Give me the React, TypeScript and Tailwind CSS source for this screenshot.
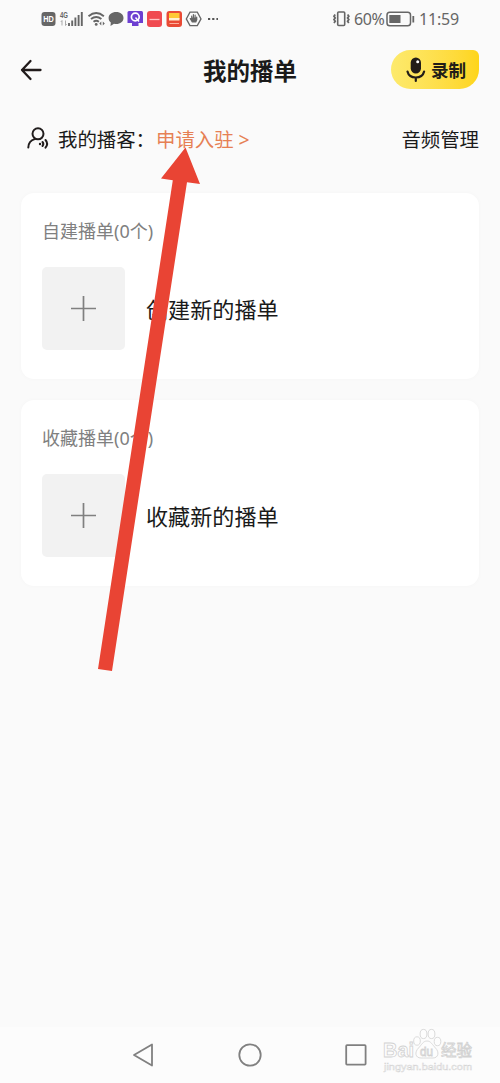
const StatusBar = () => {
  return (
    <div className="flex h-[38px] items-center pl-[41px] pr-[41px] text-[#666]">
      <svg width="180" height="20" viewBox="41 9 180 20" className="font-['Liberation_Sans',sans-serif]">
        <rect x="41.5" y="12" width="14" height="14" rx="3" fill="#666" />
        <text x="43.2" y="22.2" fontSize="8.5" fontWeight="700" fill="#fff" textLength="10.6" lengthAdjust="spacingAndGlyphs">
          HD
        </text>
        <text x="60" y="18" fontSize="8.5" fontWeight="700" fill="#666" textLength="8" lengthAdjust="spacingAndGlyphs">
          4G
        </text>
        <path d="M62 20.5v5M60.8 22l1.2-1.5M65.5 20.5v5M66.7 24l-1.2 1.5" stroke="#aaa" fill="none" />
        <path d="M69 23V26M72.2 20.5v5.5M75.4 17.5V26M78.6 15v11M81.8 12v14" stroke="#666" strokeWidth="1.9" />
        <path
          d="M88.5 16.2q7.7-6.2 15.4 0M91 19q5.2-4.2 10.4 0M93.5 21.8q2.7-2 5.4 0"
          stroke="#666"
          strokeWidth="1.9"
          fill="none"
        />
        <circle cx="96.2" cy="24.4" r="1.4" fill="#666" />
        <path d="M99.3 23.6l2-2v4zM104.8 23.6l-2-2v4z" fill="#666" />
        <path
          d="M116.2 12c4.2 0 7.3 2.5 7.3 6s-3.1 6-7.3 6c-.8 0-1.5 0-2.2-.2L110.5 26l.3-3.5c-1.5-1.2-2.2-2.7-2.2-4.5 0-3.5 3.3-6 7.6-6z"
          fill="#666"
        />
        <rect x="127.5" y="11" width="15.5" height="15" rx="1.5" fill="#6d3fd1" />
        <circle cx="135.3" cy="17" r="3.9" stroke="#fff" strokeWidth="1.7" fill="none" />
        <path d="M135.5 17.5l3.5 4" stroke="#fff" strokeWidth="1.5" />
        <path d="M127 23h5v4h-5zM138.5 23h5v4h-5z" fill="#fafafa" />
        <rect x="147" y="11" width="15" height="16" rx="3" fill="#f04a50" />
        <path d="M149.5 19.5h10" stroke="#ffc3c3" strokeWidth="1.3" />
        <rect x="166.5" y="11" width="15.5" height="16" rx="3" fill="#e94a35" />
        <path d="M169 13h10.5v6H169z" fill="#ffc934" />
        <path d="M169 18h10.5v2.5H169z" fill="#fff1d0" />
        <path d="M169.5 23.5h9.5" stroke="#ffb09c" />
        <path d="M190 12.2h7.3l3.7 6.7-3.7 6.7H190l-3.7-6.7z" stroke="#666" strokeWidth="1.3" fill="none" />
        <path
          d="M191.7 19v-3M193.4 18v-3.5M195.1 18v-3M196.7 19.5v-2.5M190.3 18.8l2 3.2h3.5l1-2.5-1-1.5h-4z"
          stroke="#666"
          strokeWidth="1.2"
          fill="#666"
          strokeLinecap="round"
        />
        <path d="M208 19h2.2M212.2 19h2.2M216.4 19h1.6" stroke="#555" strokeWidth="2" />
      </svg>
      <div className="ml-auto flex items-center">
        <svg width="20" height="18" viewBox="0 0 20 18" fill="none" stroke="#666">
          <rect x="5.7" y="2" width="7" height="13.5" rx="1" strokeWidth="1.6" />
          <path
            d="M3.2 4.5l-1.2 1.7 1.2 1.7-1.2 1.7 1.2 1.7-1.2 1.7M15.6 4.5l1.2 1.7-1.2 1.7 1.2 1.7-1.2 1.7 1.2 1.7"
            strokeWidth="1.8"
          />
        </svg>
        <span className="ml-[2px] w-[31px] whitespace-nowrap text-[16px] leading-[20px] tracking-[-0.4px]">60%</span>
        <svg width="29" height="16" viewBox="0 0 29 16" fill="none" className="ml-px">
          <rect x="1" y="1.3" width="23.5" height="13.4" rx="2.8" stroke="#666" strokeWidth="1.5" />
          <path d="M3.3 4h11.2v8H3.3z" fill="#666" />
          <path d="M27.3 5v6.5" stroke="#666" strokeWidth="1.8" />
        </svg>
        <span className="ml-[4px] w-[40px] whitespace-nowrap text-[16px] leading-[20px] tracking-[-0.2px]">11:59</span>
      </div>
    </div>
  );
};

const Header = () => {
  return (
    <header className="grid h-[64px] grid-cols-3 items-center pr-[21px] pl-[19px]">
      <svg width="23" height="22" viewBox="0 0 23 22" fill="none" stroke="#211b1b" strokeWidth="2.3" strokeLinecap="round" strokeLinejoin="round" className="mt-[-1px] ml-px">
        <path d="M10.500 2L2 11l8.500 9M2 11h18.500" />
      </svg>
      <h1 className="mt-[2px] ml-[2px] text-center text-[23.5px] leading-[32px] font-bold text-[#1a1a1a]">我的播单</h1>
      <button className="mt-[-1px] flex h-[39px] w-[88px] items-center justify-self-end rounded-[20px] rounded-tr-[6px] bg-linear-to-r from-[#fdea6c] to-[#fed518] pl-[15px] text-[#221d18]">
        <svg width="20" height="26" viewBox="0 0 20 26" fill="none" className="shrink-0">
          <rect x="4.7" y="0.5" width="10.3" height="16" rx="5.15" fill="#221d18" />
          <path d="M1.5 14.5c1 4.2 4.4 6 8.3 6s7.3-1.8 8.3-6M9.800 20.500V24" stroke="#221d18" strokeWidth="2.2" strokeLinecap="round" />
          <circle cx="11.7" cy="4.8" r="1.5" fill="#fff" />
        </svg>
        <span className="mt-[2px] ml-[5px] text-[17.6px] font-bold whitespace-nowrap">录制</span>
      </button>
    </header>
  );
};

const PlaylistCard = ({ title, action }: { title: string; action: string }) => {
  return (
    <section className="h-[186px] rounded-[13px] bg-white px-[21px] pt-[25px] shadow-[0_0_5px_rgba(0,0,0,0.025)]">
      <h2 className="text-[18px] leading-[26px] text-[#808080]">{title}</h2>
      <div className="mt-[23px] flex items-center">
        <div className="flex size-[83px] items-center justify-center rounded-[5px] bg-[#f2f2f2]">
          <svg width="25" height="25" viewBox="0 0 25 25" stroke="#808080" strokeWidth="1.7">
            <path d="M12.5 0v25M0 12.5h25" />
          </svg>
        </div>
        <span className="ml-[21px] text-[22.1px] leading-[32px] text-[#1a1a1a]">{action}</span>
      </div>
    </section>
  );
};

const Watermark = () => {
  return (
    <svg
      className="absolute right-[24px] bottom-[8px] font-['Liberation_Sans','Noto_Sans_CJK_SC',sans-serif]"
      width="96"
      height="50"
      viewBox="380 1025 96 50"
      fill="#fdfdfd"
      stroke="#d2d2d2"
      strokeWidth="0.8"
    >
      <text x="383" y="1057" fontSize="20" fontWeight="700" textLength="31" lengthAdjust="spacingAndGlyphs">
        Bai
      </text>
      <ellipse cx="417" cy="1041" rx="3.3" ry="4.2" />
      <ellipse cx="423.5" cy="1034" rx="3.4" ry="4.6" />
      <ellipse cx="431.5" cy="1034" rx="3.4" ry="4.6" />
      <ellipse cx="437.5" cy="1041.5" rx="3.3" ry="4.2" />
      <path d="M427 1041c4 0 5.5 4 8.5 7 4 4 3 10-2.5 10-3 0-9 0-12 0-6 0-6.5-6-2.5-10 3-3 4.5-7 8.5-7z" />
      <text x="420" y="1055.5" fontSize="12" textLength="13" lengthAdjust="spacingAndGlyphs">
        du
      </text>
      <text x="441" y="1055.5" fontSize="15.5" textLength="31" lengthAdjust="spacingAndGlyphs">
        经验
      </text>
      <text x="384" y="1069.5" fontSize="9" strokeWidth="0.4" textLength="88" lengthAdjust="spacingAndGlyphs">
        jingyan.baidu.com
      </text>
    </svg>
  );
};

const App = () => {
  return (
    <div className="relative flex h-[1083px] w-[500px] flex-col overflow-hidden bg-[#fafafa] font-['Noto_Sans','Noto_Sans_CJK_SC',sans-serif]">
      <StatusBar />
      <Header />
      <div className="flex h-[91px] items-start px-[21px] pt-[24px] text-[19.4px] leading-[28px] text-[#1a1a1a]">
        <svg width="26" height="26" viewBox="0 0 26 26" fill="none" stroke="#211d1d" strokeWidth="2" strokeLinecap="round" className="ml-[5px]">
          <circle cx="12" cy="7.8" r="5.5" />
          <path d="M2.3 21.5c.2-4.8 2.7-7.5 6.5-8.4M19.5 14c2 2.3 2 5.3 0 7.7M16.5 16c1 1.2 1 2.8 0 4" />
          <circle cx="14" cy="18" r="1.2" fill="#211d1d" stroke="none" />
        </svg>
        <span className="ml-[6px] w-[98px] whitespace-nowrap">我的播客：</span>
        <a className="whitespace-nowrap text-[#e68054]">
          申请入驻 <span>&gt;</span>
        </a>
        <span className="ml-auto">音频管理</span>
      </div>
      <main className="flex flex-1 flex-col gap-[21px] px-[21px]">
        <PlaylistCard title="自建播单(0个)" action="创建新的播单" />
        <PlaylistCard title="收藏播单(0个)" action="收藏新的播单" />
      </main>
      <nav className="flex h-[56px] items-center justify-center gap-[83px] bg-[#fcfcfc] pr-[2px]">
        <svg width="24" height="26" viewBox="0 0 24 26" fill="none" stroke="#808080" strokeWidth="1.8" strokeLinejoin="round">
          <path d="M3 13L21 2.500v21z" />
        </svg>
        <svg width="24" height="24" viewBox="0 0 24 24" fill="none" stroke="#808080" strokeWidth="1.8">
          <circle cx="12" cy="12" r="10.7" />
        </svg>
        <svg width="22" height="22" viewBox="0 0 22 22" fill="none" stroke="#808080" strokeWidth="1.8">
          <rect x="1.2" y="1.2" width="19.4" height="19.4" rx="0.8" />
        </svg>
      </nav>
      <Watermark />
      {/* pointer to the apply link */}
      <svg className="pointer-events-none absolute top-[140px] left-[90px]" width="120" height="540" viewBox="90 140 120 540">
        <path d="M185.5 147.5L200 184l-13-1.8L112 671l-14-2L172.8 180.2 161 178.5z" fill="#e94434" />
      </svg>
    </div>
  );
};
export default App;
